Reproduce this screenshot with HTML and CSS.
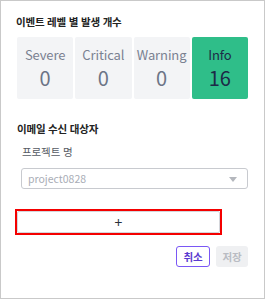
FILE: index.html
```html
<!DOCTYPE html>
<html lang="ko">
<head>
<meta charset="utf-8">
<link rel="stylesheet" href="styles.css">
</head>
<body>
<div class="panel">
  <div class="title">이벤트 레벨 별 발생 개수</div>
  <div class="cards">
    <div class="card"><div class="label">Severe</div><div class="num">0</div></div>
    <div class="card"><div class="label">Critical</div><div class="num">0</div></div>
    <div class="card"><div class="label">Warning</div><div class="num">0</div></div>
    <div class="card info"><div class="label">Info</div><div class="num">16</div></div>
  </div>
  <div class="title title2">이메일 수신 대상자</div>
  <div class="field">
    <div class="field-label">프로젝트 명</div>
    <div class="select">
      <span class="placeholder">project0828</span>
      <svg class="caret" width="8" height="5" viewBox="0 0 8 5"><path d="M0 0H8L4 5Z" fill="#b4b7bd"/></svg>
    </div>
  </div>
  <div class="add-wrap">
    <div class="add-btn">+</div>
  </div>
  <div class="actions">
    <div class="btn cancel">취소</div>
    <div class="btn save">저장</div>
  </div>
</div>
</body>
</html>
```
FILE: styles.css
```css
* { box-sizing: border-box; }
body {
  margin: 0;
  background: #fff;
  font-family: "Noto Sans CJK KR", "Noto Sans", sans-serif;
}
.panel {
  width: 265px;
  height: 299px;
  border: 1px solid #c9c9c9;
  padding: 14px 16px 0 15px;
}
.title {
  font-size: 10.5px;
  line-height: 14px;
  font-weight: 700;
  color: #222;
  letter-spacing: -0.2px;
}
.cards {
  margin-top: 8px;
  display: grid;
  grid-template-columns: repeat(4, 1fr);
  gap: 2px;
  margin-left: 1px;
}
.card {
  height: 62px;
  background: #f3f4f6;
  border-radius: 2px;
  padding-top: 10px;
  text-align: center;
}
.label {
  font-size: 13px;
  line-height: 16px;
  color: #7a8191;
  letter-spacing: -0.1px;
}
.num {
  margin-top: 5px;
  font-size: 20px;
  line-height: 20px;
  color: #6c7486;
}
.info { background: #2fbe89; }
.info .label, .info .num { color: #1d2a47; }
.title2 { margin-top: 23px; margin-left: 1px; }
.field { margin-left: 5px; margin-top: 9px; }
.field-label {
  font-size: 10.5px;
  line-height: 14px;
  color: #555a63;
  letter-spacing: -0.1px;
  margin-left: 1px;
}
.select {
  margin-top: 9px;
  height: 21px;
  border: 1px solid #c8cacf;
  border-radius: 3px;
  display: flex;
  align-items: center;
  justify-content: space-between;
  padding: 0 10px 0 6px;
}
.placeholder {
  font-size: 10.5px;
  color: #a9adb6;
}
.caret { margin-top: 1px; }
.add-wrap {
  margin-top: 20px;
  width: 207px;
  margin-left: -1px;
  border: 2px solid #f40000;
}
.add-btn {
  height: 22px;
  border: 1px solid #d4d6db;
  border-radius: 2px;
  display: flex;
  align-items: center;
  justify-content: center;
  font-size: 14px;
  color: #2a2f3a;
  line-height: 1;
}
.actions {
  margin-top: 11px;
  display: flex;
  justify-content: flex-end;
  gap: 6px;
}
.btn {
  height: 21px;
  border-radius: 3px;
  font-size: 10.5px;
  font-weight: 700;
  display: flex;
  align-items: center;
  justify-content: center;
  letter-spacing: -0.2px;
}
.cancel {
  width: 34px;
  border: 1px solid #7a57f5;
  color: #5c3bd0;
}
.save {
  width: 32px;
  background: #eff0f2;
  color: #b9bcc3;
}
```
